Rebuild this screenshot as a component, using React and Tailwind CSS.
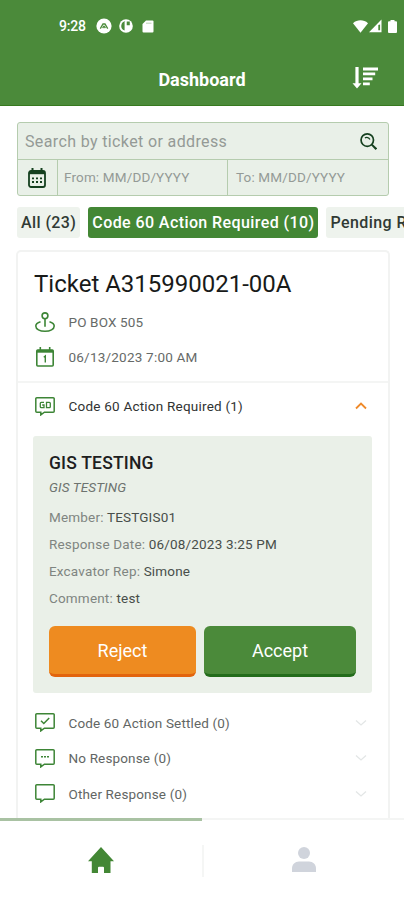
import { useState } from "react";

const RESPONSE_GROUPS = [
  { id: "settled", label: "Code 60 Action Settled (0)", icon: "check" },
  { id: "none", label: "No Response (0)", icon: "dots" },
  { id: "other", label: "Other Response (0)", icon: "empty" },
];

const FILTERS = ["All (23)", "Code 60 Action Required (10)", "Pending R"];

const StatusBar = () => (
  <div className="flex h-[52px] items-center pl-[59px] pr-[7px] text-white">
    <span className="w-[28px] text-[14px] font-medium leading-4 tracking-[-0.2px]">9:28</span>
    <svg className="ml-[9px]" width="16" height="16" viewBox="0 0 16 16">
      <circle cx="8" cy="8" r="7.6" fill="white" />
      <path d="M4.3 10.6 7 6h2l2.7 4.6M6.6 10l1.4-1.8L9.4 10" fill="none" stroke="#4b8a3a" strokeWidth="1.3" />
    </svg>
    <svg className="ml-[7px]" width="14" height="14" viewBox="0 0 14 14">
      <circle cx="7" cy="7" r="6.8" fill="white" />
      <path d="M7 2.3A4.7 4.7 0 0 0 5.6 11.5V3M7.6 2.6h3.2v3.6H7.6z" fill="#4b8a3a" />
      <path d="M6.8 2v10" stroke="white" strokeWidth="1" />
    </svg>
    <svg className="ml-[9px]" width="12" height="13" viewBox="0 0 12 13">
      <path d="M4 .5h6.5a1 1 0 0 1 1 1v10a1 1 0 0 1-1 1h-9a1 1 0 0 1-1-1V4z" fill="white" />
      <path d="M4 3.2h5.5" stroke="#bcd3b5" strokeWidth="1" />
    </svg>
    <svg className="ml-auto" width="15" height="13" viewBox="0 0 15 13">
      <path d="M0 3.2C4.4-.6 10.6-.6 15 3.2L7.5 12.8z" fill="white" />
    </svg>
    <svg className="ml-[1px]" width="13" height="14" viewBox="0 0 13 14">
      <path d="M12.5.5v12.8H0z" fill="white" />
      <path d="M9.3 6v5.2h1.8V5.5z" fill="#4b8a3a" />
    </svg>
    <svg className="ml-[6px]" width="9" height="13" viewBox="0 0 9 13">
      <path d="M2.5 0h4v1.2H8a1 1 0 0 1 1 1V12a1 1 0 0 1-1 1H1a1 1 0 0 1-1-1V2.2a1 1 0 0 1 1-1h1.5z" fill="white" />
    </svg>
  </div>
);

const Header = () => (
  <header className="h-[106px] shrink-0 border-b border-[#37791f] bg-[#4b8a3a]">
    <StatusBar />
    <div className="grid h-[55px] grid-cols-[1fr_auto_1fr] items-center">
      <span />
      <h1 className="text-[18px] font-bold leading-6 text-white">Dashboard</h1>
      <button className="mb-[3px] mr-[26px] justify-self-end">
        <svg width="26" height="22" viewBox="0 0 26 22" fill="white">
          <path d="M3.4 0h3.200v16.200h2.900L5 21.500.5 16.200h2.900z" />
          <path d="M11 .6h15v2.800H11zM11 5.500h12.200v2.800H11zM11 10.400h9.500v2.800H11zM11 15.400h6.800v2.800H11z" />
        </svg>
      </button>
    </div>
  </header>
);

const SearchBox = () => (
  <div className="ml-[17px] mr-[15px] mt-[16px] flex h-[74px] shrink-0 flex-col rounded-[3px] border border-[#b5ccae] bg-[#e9f0e8] text-[#949a96]">
    <div className="flex h-[37px] items-center border-b border-[#b5ccae] pl-[7px] pr-[11px]">
      <span className="mt-[2px] flex-1 text-[16px] tracking-[0.37px]">Search by ticket or address</span>
      <svg width="17" height="17" viewBox="0 0 18 18" fill="none" stroke="#15401f" strokeWidth="1.8">
        <circle cx="7.7" cy="7.5" r="6.6" />
        <path d="m12.5 12.3 4.800 4.800" strokeWidth="2.200" />
        <path d="M5.200 5.200c1.900-1 4.200-.4 5.300 1.700" strokeWidth="1.400" />
      </svg>
    </div>
    <div className="flex flex-1 text-[13.5px] tracking-[0.15px]">
      <div className="flex w-[40px] items-center justify-center border-r border-[#b5ccae] pr-[1px]">
        <svg width="18" height="20" viewBox="0 0 18 20" fill="none" stroke="#15401f">
          <rect x="1" y="3" width="16" height="16" rx="2" strokeWidth="1.8" />
          <path d="M1 4.700h16" strokeWidth="3" />
          <path d="M4.500 0v4M13.500 0v4" strokeWidth="2" />
          <path d="M4 10.300h10M4 14h10" strokeWidth="1.8" strokeDasharray="2 2" />
        </svg>
      </div>
      <div className="flex w-[170px] items-center border-r border-[#b5ccae] pl-[6px]">From: MM/DD/YYYY</div>
      <div className="flex flex-1 items-center pl-[8px]">To: MM/DD/YYYY</div>
    </div>
  </div>
);

const CommentIcon = ({ type }) => (
  <svg width="20" height="19" viewBox="0 0 20 19" fill="none" stroke="#3d8536" strokeWidth="1.5">
    <path d="M1.800.8h16.400a1 1 0 0 1 1 1v12.400a1 1 0 0 1-1 1H9.400L5.800 17.900v-2.700h-4a1 1 0 0 1-1-1V1.800a1 1 0 0 1 1-1z" />
    {type === "check" && <path d="m6 7.800 2.800 2.700L14.200 5" />}
    {type === "dots" && <path d="M6 7.800h8" strokeDasharray="2 1" />}
    {type === "sixty" && (
      <path
        d="M9 5.300H6.300a1 1 0 0 0-1 1v3.400a1 1 0 0 0 1 1H9V8H7.200M11.500 5.300h2.800a1 1 0 0 1 1 1v3.400a1 1 0 0 1-1 1h-2.800z"
        strokeWidth="1.3"
      />
    )}
  </svg>
);

const Chevron = ({ up }) => (
  <svg width="12" height="8" viewBox="0 0 12 8" fill="none">
    {up ? (
      <path d="m1 6.500 5-5 5 5" stroke="#ef8a2a" strokeWidth="1.800" />
    ) : (
      <path d="m1 1.500 5 4.500 5-4.500" stroke="#e3e6e6" strokeWidth="1.300" />
    )}
  </svg>
);

const Detail = ({ label, value }) => (
  <p className="h-[27px] text-[13.5px] leading-[27px] tracking-[0.18px] text-[#7f8581]">
    {label}: <span className="text-[#484e4a]">{value}</span>
  </p>
);

const TicketCard = () => (
  <div className="ml-[16px] mr-[14px] mt-[12px] flex-1 rounded-t-[5px] border-2 border-b-0 border-[#f2f3f2] bg-white">
    <div className="h-[131px] border-b-2 border-[#f4f5f4] pl-[16px] pt-[17px]">
      <h2 className="text-[24px] leading-[30px] text-[#181a19]">Ticket A315990021-00A</h2>
      <div className="mt-[6px] flex h-[35px] items-center text-[13.5px] text-[#666a68]">
        <svg className="ml-[1px] mr-[13.500px]" width="20" height="21" viewBox="0 0 20 21" fill="none" stroke="#3d8536" strokeWidth="1.6">
          <circle cx="10" cy="3.800" r="2.900" />
          <path d="M10 6.700v8M5.500 9.800C2.500 10.700.8 12 .8 14c0 3.200 4 5.300 9.200 5.300s9.200-2.100 9.200-5.300c0-2-1.700-3.300-4.700-4.200" />
        </svg>
        <span className="tracking-[0.15px]">PO BOX 505</span>
      </div>
      <div className="flex h-[35px] items-center text-[13.5px] text-[#666a68]">
        <svg className="mb-[2px] ml-[1px] mr-[13.500px]" width="20" height="20" viewBox="0 0 20 20" fill="none" stroke="#3d8536" strokeWidth="1.6">
          <rect x="1.800" y="3" width="16.400" height="16" rx="1" />
          <path d="M1.800 4.300h16.400" strokeWidth="2.800" />
          <path d="M5.300 0v4M14.700 0v4" />
          <path d="M8.800 10.200 10.300 9v6.600" strokeWidth="1.400" />
        </svg>
        <span className="tracking-[0.22px]">06/13/2023 7:00 AM</span>
      </div>
    </div>

    <div className="flex h-[46px] items-center pl-[17px] pr-[21px]">
      <CommentIcon type="sixty" />
      <span className="ml-[13.500px] flex-1 text-[13.5px] tracking-[0.22px] text-[#303332]">Code 60 Action Required (1)</span>
      <Chevron up />
    </div>

    <div className="ml-[15px] mr-[16px] mt-[7px] h-[257px] rounded-[3px] bg-[#eaf0e8] px-[16px] pt-[15px]">
      <h3 className="text-[17.5px] font-medium leading-6 tracking-[0.2px] text-[#1d201e]">GIS TESTING</h3>
      <p className="mb-[5px] text-[13.5px] italic leading-6 tracking-[0.12px] text-[#6d736f]">GIS TESTING</p>
      <Detail label="Member" value="TESTGIS01" />
      <Detail label="Response Date" value="06/08/2023 3:25 PM" />
      <Detail label="Excavator Rep" value="Simone" />
      <Detail label="Comment" value="test" />
      <div className="mt-[14px] flex gap-[8px] text-[18px] text-white">
        <button className="h-[51px] w-[147px] rounded-[6px] border-b-[3px] border-[#e2640d] bg-[#ee8b20]">Reject</button>
        <button className="h-[51px] w-[152px] rounded-[6px] border-b-[3px] border-[#236c1b] bg-[#4b8a3a]">Accept</button>
      </div>
    </div>

    <div className="mt-[12px]">
      {RESPONSE_GROUPS.map((group) => (
        <div key={group.id} className="flex h-[35.5px] items-center pl-[17px] pr-[21px]">
          <CommentIcon type={group.icon} />
          <span className="ml-[13.500px] mt-[0.5px] flex-1 text-[13.5px] tracking-[0.15px] text-[#626664]">{group.label}</span>
          <Chevron />
        </div>
      ))}
    </div>
  </div>
);

const BottomNav = () => (
  <nav className="grid h-[82px] shrink-0 grid-cols-2 bg-white">
    <div className="flex justify-center border-t-[3px] border-[#a9c2a3] pt-[26px]">
      <svg width="26" height="26" viewBox="0 0 26 26">
        <path d="M13 0 26 14.200h-3.500V26H16v-5.200a1 1 0 0 0-1-1h-4a1 1 0 0 0-1 1V26H3.800V14.200H0z" fill="#438735" />
      </svg>
    </div>
    <div className="flex border-t-2 border-[#f4f5f4] pt-[25px]">
      <span className="h-8 w-[2px] bg-[#f5f6f5]" />
      <svg className="mx-auto mt-[2px]" width="24" height="25" viewBox="0 0 24 25" fill="#d0d4dc">
        <circle cx="12" cy="6" r="6" />
        <path d="M0 25v-3.500C0 17.500 3 14.500 7 14.500h10c4 0 7 3 7 7V25z" />
      </svg>
    </div>
  </nav>
);

const App = () => {
  const [activeFilter, setActiveFilter] = useState(1);

  return (
    <div className="flex h-[900px] w-[404px] flex-col overflow-hidden bg-white font-['Roboto',sans-serif]">
      <Header />
      <main className="flex min-h-0 flex-1 flex-col overflow-hidden">
        <SearchBox />
        <div className="ml-[17px] mt-[11px] flex h-[31px] shrink-0 gap-[8px] overflow-hidden">
          {FILTERS.map((filter, index) => (
            <button
              key={filter}
              onClick={() => setActiveFilter(index)}
              className={`shrink-0 whitespace-nowrap rounded-[3px] px-[4px] text-[16px] font-medium tracking-[0.41px] ${
                index === activeFilter ? "bg-[#438735] text-white" : "bg-[#eef3ed] text-[#303a34]"
              }`}
            >
              {filter}
            </button>
          ))}
        </div>
        <TicketCard />
      </main>
      <BottomNav />
    </div>
  );
};

export default App;
